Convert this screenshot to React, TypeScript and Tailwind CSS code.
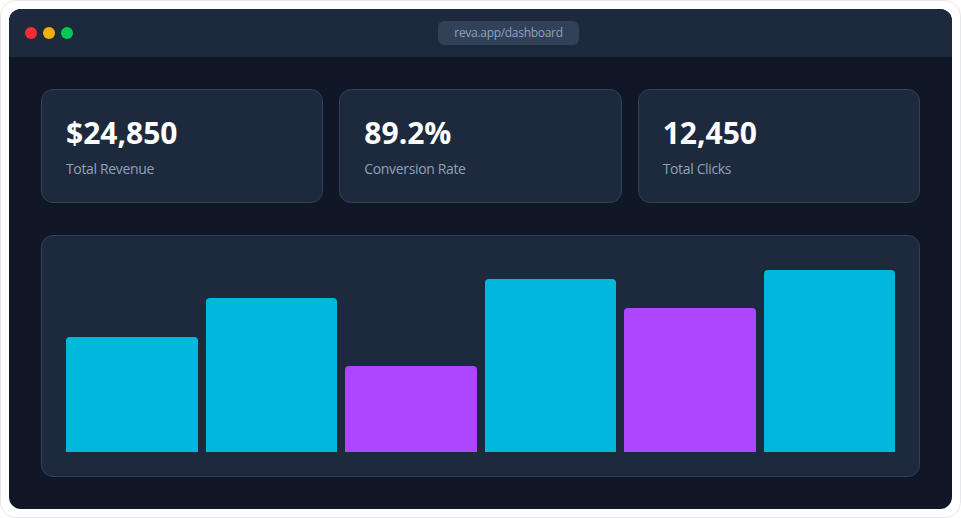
const stats = [
  { value: "$24,850", label: "Total Revenue" },
  { value: "89.2%", label: "Conversion Rate" },
  { value: "12,450", label: "Total Clicks" },
];

const bars = [
  { h: 60, color: "bg-cyan-500" },
  { h: 80, color: "bg-cyan-500" },
  { h: 45, color: "bg-purple-500" },
  { h: 90, color: "bg-cyan-500" },
  { h: 75, color: "bg-purple-500" },
  { h: 95, color: "bg-cyan-500" },
];

export default function App() {
  return (
    <div className="w-[961px] h-[518px] bg-white border border-gray-200 rounded-2xl p-2 font-['Open_Sans',sans-serif]">
      <div className="h-full rounded-xl overflow-hidden bg-gray-900 flex flex-col">
        {/* Browser bar */}
        <div className="h-12 shrink-0 bg-slate-800 px-4 flex items-center gap-2">
          <div className="flex items-center gap-1.5">
            <span className="w-3 h-3 rounded-full bg-red-500"></span>
            <span className="w-3 h-3 rounded-full bg-yellow-500"></span>
            <span className="w-3 h-3 rounded-full bg-green-500"></span>
          </div>
          <div className="flex-1 flex justify-center">
            <div className="h-6 px-4 rounded-md bg-slate-700 text-slate-400 text-xs tracking-tight flex items-center">
              reva.app/dashboard
            </div>
          </div>
        </div>

        <div className="flex-1 px-8 pt-8">
          {/* Stat cards */}
          <div className="grid grid-cols-3 gap-4">
            {stats.map((s) => (
              <div
                key={s.label}
                className="bg-slate-800 border border-slate-700 rounded-xl p-6"
              >
                <div className="text-3xl font-bold text-white pt-px">{s.value}</div>
                <div className="mt-2 -mb-px text-sm tracking-tight text-slate-400">{s.label}</div>
              </div>
            ))}
          </div>

          {/* Chart */}
          <div className="mt-8 bg-slate-800 border border-slate-700 rounded-xl p-6">
            <div className="h-48 flex items-end gap-2">
              {bars.map((b, i) => (
                <div
                  key={i}
                  className={`flex-1 rounded-t ${b.color}`}
                  style={{ height: `${b.h}%` }}
                ></div>
              ))}
            </div>
          </div>
        </div>
      </div>
    </div>
  );
}
